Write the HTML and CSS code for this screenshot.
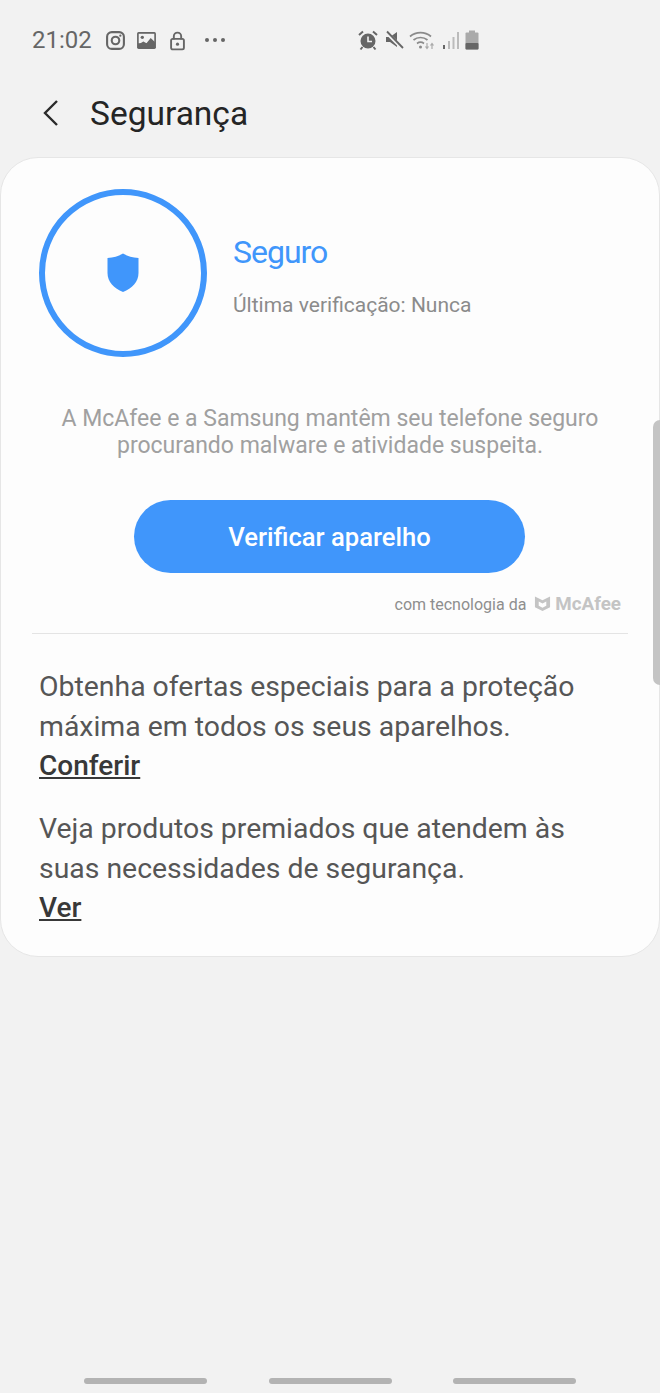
FILE: index.html
```html
<!DOCTYPE html>
<html lang="pt-BR">
<head>
    <meta charset="UTF-8">
    <meta name="viewport" content="width=device-width, initial-scale=1.0">
    <title>Segurança</title>
    <link rel="stylesheet" href="styles.css">
</head>
<body>
    <div class="status-bar">
        <div class="status-left">
            <span class="clock">21:02</span>
            <svg class="status-icon" viewBox="0 0 20 20" width="20" height="20"><rect x="2" y="2" width="16" height="16" rx="4.5" fill="none" stroke="#666" stroke-width="2"/><circle cx="10" cy="10" r="3.6" fill="none" stroke="#666" stroke-width="2"/><circle cx="14.6" cy="5.4" r="1.1" fill="#666"/></svg>
            <svg class="status-icon" viewBox="0 0 20 20" width="20" height="20"><rect x="1" y="2" width="18" height="16" rx="1.5" fill="#666"/><rect x="2.6" y="3.6" width="14.8" height="9" fill="#f2f2f2"/><circle cx="6" cy="7" r="1.6" fill="#666"/><path d="M2 14l5-3 3 1.500 4-5 4 4v5H2z" fill="#666"/></svg>
            <svg class="status-icon" viewBox="0 0 20 20" width="20" height="20"><path d="M6.500 9V6a3.500 3.500 0 0 1 7 0v3" fill="none" stroke="#666" stroke-width="1.800"/><rect x="3.900" y="8.500" width="12.200" height="10" rx="1.500" fill="none" stroke="#666" stroke-width="1.800"/><circle cx="10" cy="13.500" r="1.500" fill="#666"/></svg>
            <span class="more-dots"><i></i><i></i><i></i></span>
        </div>
        <div class="status-right">
            <svg viewBox="0 0 22 22" width="22" height="22"><circle cx="11" cy="12" r="7.500" fill="#666"/><path d="M11 7.500V12.500H15" fill="none" stroke="#f2f2f2" stroke-width="1.600"/><path d="M2 6l4-3.500M20 6l-4-3.500M5.500 18l-2 2.500M16.500 18l2 2.500" stroke="#666" stroke-width="2"/></svg>
            <svg viewBox="0 0 20 20" width="20" height="20"><path d="M2 7h4l7-5v15l-7-5H2z" fill="#666"/><path d="M2 2l16 16" stroke="#f2f2f2" stroke-width="3.500"/><path d="M3 1.500l16 16.500" stroke="#666" stroke-width="1.800"/></svg>
            <svg viewBox="0 0 28 22" width="28" height="22"><path d="M1 7.500a16 16 0 0 1 21 0M4.500 11a11 11 0 0 1 14 0M8 14.500a6 6 0 0 1 7 0" fill="none" stroke="#8a8a8a" stroke-width="1.700"/><circle cx="11.500" cy="18" r="1.500" fill="#8a8a8a"/><path d="M18 14v5M16.500 17.500l1.500 2 1.500-2M23 20v-5M21.500 16.500l1.500-2 1.500 2" fill="none" stroke="#aaa" stroke-width="1.200"/></svg>
            <svg viewBox="0 0 18 22" width="18" height="22"><rect x="1" y="16" width="2" height="4" fill="#666"/><rect x="6" y="12" width="2" height="8" fill="#bbb"/><rect x="10.500" y="8" width="2" height="12" fill="#bbb"/><rect x="15" y="3" width="2" height="17" fill="#bbb"/></svg>
            <svg viewBox="0 0 14 20" width="14" height="20"><rect x="4" y="0.500" width="6" height="2.500" fill="#aaa"/><rect x="0.500" y="2.500" width="13" height="17" rx="1" fill="#aaa"/><rect x="0.500" y="13" width="13" height="6.500" rx="1" fill="#666"/></svg>
        </div>
    </div>

    <div class="title-bar">
        <svg class="back-icon" viewBox="0 0 18 28" width="18" height="28"><path d="M15 2L3 14l12 12" fill="none" stroke="#2b2b2b" stroke-width="2.400"/></svg>
        <h1>Segurança</h1>
    </div>

    <div class="card">
        <div class="summary">
            <div class="ring">
                <svg viewBox="0 0 32 40" width="32" height="40"><path d="M16 0.500c4 2.500 9 4 15.500 4.500v15c0 9-6.500 15.500-15.500 19C7 35.500 0.500 29 0.500 20V5C7 4.500 12 3 16 0.500z" fill="#4096fb"/></svg>
            </div>
            <div class="summary-text">
                <div class="state">Seguro</div>
                <div class="last-check">Última verificação: Nunca</div>
            </div>
        </div>

        <p class="about">A McAfee e a Samsung mantêm seu telefone seguro procurando malware e atividade suspeita.</p>

        <button class="scan-btn">Verificar aparelho</button>

        <div class="powered">
            <span>com tecnologia da</span>
            <svg viewBox="0 0 18 18" width="17" height="17"><path d="M1 1.500l8 4 8-4V13l-8 4-8-4z" fill="#c4c4c4"/><path d="M5 7l4 2 4-2v4.500l-4 2-4-2z" fill="#fdfdfd"/></svg>
            <span class="brand">McAfee</span>
        </div>

        <div class="offers">
            <div class="offer">
                <p>Obtenha ofertas especiais para a proteção máxima em todos os seus aparelhos.</p>
                <a href="#">Conferir</a>
            </div>
            <div class="offer">
                <p>Veja produtos premiados que atendem às suas necessidades de segurança.</p>
                <a href="#">Ver</a>
            </div>
        </div>
    </div>

    <div class="scroll-thumb"></div>

    <div class="nav-bar">
        <span></span>
        <span></span>
        <span></span>
    </div>
</body>
</html>
```

FILE: styles.css
```css
html, body {
    height: 100%;
}

body {
    position: relative;
    margin: 0;
    height: 1393px;
    overflow: hidden;
    background: #f2f2f2;
    font-family: Roboto, "Liberation Sans", sans-serif;
    color: #333;
    display: flex;
    flex-direction: column;
}

.status-bar {
    height: 24px;
    padding: 28px 180px 0 32px;
    margin-bottom: -1px;
    display: flex;
    justify-content: space-between;
    align-items: center;
}

.status-left {
    display: flex;
    align-items: center;
    gap: 10px;
}

.status-right {
    display: flex;
    align-items: center;
    gap: 5px;
    margin-right: 1px;
}

.status-left svg {
    width: 21px;
    height: 21px;
}

.clock {
    font-size: 24px;
    color: #666;
    margin-right: 3px;
}

.more-dots {
    display: flex;
    gap: 4px;
    margin-left: 7px;
}

.more-dots i {
    width: 4px;
    height: 4px;
    border-radius: 50%;
    background: #666;
}

.title-bar {
    height: 106px;
    box-sizing: border-box;
    padding: 18px 0 0 42px;
    display: flex;
    align-items: center;
    gap: 30px;
}

.title-bar h1 {
    margin: 0;
    font-size: 33.5px;
    font-weight: 400;
    color: #252525;
}

.card {
    height: 800px;
    box-sizing: border-box;
    background: #fdfdfd;
    border: 1px solid #e6e6e6;
    border-radius: 38px;
    padding: 31px 31px 0;
}

.summary {
    display: flex;
    align-items: center;
    gap: 26px;
    padding-left: 7px;
}

.ring {
    width: 168px;
    height: 168px;
    box-sizing: border-box;
    border: 6px solid #4096fb;
    border-radius: 50%;
    display: flex;
    align-items: center;
    justify-content: center;
}

.summary-text {
    padding-top: 3px;
}

.state {
    font-size: 32px;
    letter-spacing: -1px;
    color: #4096fb;
    margin-bottom: 22px;
}

.last-check {
    font-size: 21px;
    color: #8b8b8b;
}

.about {
    margin: 48px 0 0;
    font-size: 23px;
    line-height: 27px;
    text-align: center;
    color: #a0a0a0;
}

.scan-btn {
    display: block;
    width: 391px;
    height: 73px;
    margin: 41px 0 0 102px;
    padding: 1px 0 0;
    border: none;
    border-radius: 37px;
    background: #4096fb;
    color: white;
    font-family: inherit;
    font-size: 25.6px;
    font-weight: 500;
}

.powered {
    height: 61px;
    box-sizing: border-box;
    border-bottom: 1px solid #e4e4e4;
    padding: 22px 7px 0 0;
    display: flex;
    justify-content: flex-end;
    align-items: flex-start;
    gap: 8px;
    font-size: 16px;
    color: #8e8e8e;
}

.brand {
    margin-left: -4px;
    margin-top: -2px;
    font-size: 18.8px;
    font-weight: 700;
    color: #c4c4c4;
}

.offers {
    padding: 33px 7px 0;
    display: flex;
    flex-direction: column;
    gap: 24px;
}

.offer p {
    margin: 0;
    font-size: 28.4px;
    line-height: 40px;
    color: #565656;
}

.offer a {
    display: block;
    font-size: 28px;
    line-height: 38px;
    font-weight: 500;
    color: #383838;
    text-decoration: underline;
}

.scroll-thumb {
    position: absolute;
    top: 420px;
    right: 0;
    width: 7px;
    height: 265px;
    border-radius: 7px 0 0 7px;
    background: #c4c4c4;
}

.nav-bar {
    position: absolute;
    left: 84px;
    right: 84px;
    bottom: 9px;
    display: flex;
    justify-content: space-between;
}

.nav-bar span {
    width: 123px;
    height: 6px;
    border-radius: 3px;
    background: #b3b3b3;
}
```
